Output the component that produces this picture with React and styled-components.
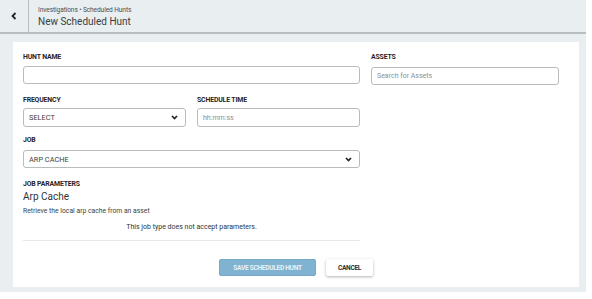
import React from 'react';
import styled, { createGlobalStyle } from 'styled-components';

const GlobalStyle = createGlobalStyle`
  html, body {
    margin: 0;
    padding: 0;
    background: #ffffff;
    font-family: Roboto, "Liberation Sans", sans-serif;
  }
`;

const Page = styled.div`
  width: 586px;
  height: 292px;
  background: #e9eef1;
  display: flex;
  flex-direction: column;
`;

const Header = styled.header`
  height: 32px;
  display: flex;
  align-items: stretch;
  border-bottom: 2px solid #b9bec1;
`;

const BackButton = styled.button`
  width: 29px;
  border: none;
  border-right: 1px solid #b9bec1;
  background: transparent;
  padding: 0;
  display: flex;
  align-items: center;
  justify-content: center;
`;

const HeaderText = styled.div`
  display: flex;
  flex-direction: column;
  justify-content: center;
  padding-left: 9px;
  padding-top: 1px;
`;

const Crumbs = styled.div`
  font-size: 6.6px;
  color: #4a4f53;
  line-height: 9px;
  letter-spacing: -0.1px;
`;

const Title = styled.h1`
  margin: 0;
  font-size: 10px;
  font-weight: 400;
  color: #3a3f42;
  line-height: 13px;
`;

const Body = styled.div`
  flex: 1;
  padding: 8px 7px 5px 13px;
  display: flex;
`;

const Card = styled.div`
  flex: 1;
  background: #ffffff;
  padding: 11px 10px 0 10px;
  display: flex;
  flex-direction: column;
`;

const Columns = styled.div`
  display: grid;
  grid-template-columns: 337px 188px;
  column-gap: 11px;
`;

const Column = styled.div`
  display: flex;
  flex-direction: column;
`;

const Row = styled.div`
  display: grid;
  grid-template-columns: 163px 163px;
  column-gap: 11px;
  margin-top: ${p => p.$mt || 0}px;
`;

const Field = styled.div`
  display: flex;
  flex-direction: column;
  margin-top: ${p => p.$mt || 0}px;
`;

const Label = styled.label`
  font-size: 6.9px;
  font-weight: 700;
  color: #1f2427;
  line-height: 8px;
  letter-spacing: -0.15px;
  margin-bottom: ${p => p.$mb ?? 5}px;
`;

const Input = styled.input`
  box-sizing: border-box;
  width: 100%;
  height: ${p => p.$h || 18}px;
  border: 1px solid #b7bcbf;
  border-radius: 3px;
  padding: 0 5px;
  font-family: inherit;
  font-size: 7px;
  color: #333;
  outline: none;
  &::placeholder {
    color: #8b9094;
  }
`;

const Select = styled.div`
  box-sizing: border-box;
  height: ${p => p.$h || 19}px;
  border: 1px solid #b7bcbf;
  border-radius: 3px;
  padding: 0 7px 0 5px;
  display: flex;
  align-items: center;
  justify-content: space-between;
  font-size: 7.4px;
  color: #3a3f42;
`;

const ParamsName = styled.div`
  font-size: 10px;
  color: #2f3437;
  line-height: 11px;
  margin-top: 3px;
`;

const ParamsDesc = styled.div`
  font-size: 6.8px;
  color: #3a3f42;
  line-height: 8px;
  margin-top: 5px;
`;

const EmptyNote = styled.div`
  text-align: center;
  font-size: 7px;
  color: #2f3437;
  line-height: 8px;
  margin-top: 8px;
  padding-bottom: 9px;
  border-bottom: 1px solid #e6e8ea;
`;

const Actions = styled.div`
  display: flex;
  justify-content: center;
  gap: 10px;
  margin-top: 18px;
`;

const Button = styled.button`
  height: 17px;
  padding: 0;
  width: ${p => p.$w}px;
  border-radius: 2px;
  font-family: inherit;
  font-size: 6.6px;
  font-weight: 700;
  letter-spacing: -0.3px;
  border: ${p => (p.$primary ? '1px solid #75a9c6' : 'none')};
  background: ${p => (p.$primary ? '#80b3d1' : '#ffffff')};
  color: ${p => (p.$primary ? '#e8f1f7' : '#2a2f32')};
  box-shadow: ${p => (p.$primary ? 'none' : '0 1px 3px rgba(0,0,0,0.3)')};
`;

const Chevron = () => (
  <svg width="7" height="5" viewBox="0 0 7 5">
    <polyline points="1,1 3.5,3.6 6,1" fill="none" stroke="#1f2427" strokeWidth="1.7" />
  </svg>
);

const BackIcon = () => (
  <svg width="6" height="8" viewBox="0 0 6 8">
    <polyline points="4.5,1 1.5,4 4.5,7" fill="none" stroke="#1f2427" strokeWidth="1.8" />
  </svg>
);

export default function App() {
  return (
    <>
      <GlobalStyle />
      <Page>
        <Header>
          <BackButton><BackIcon /></BackButton>
          <HeaderText>
            <Crumbs>Investigations • Scheduled Hunts</Crumbs>
            <Title>New Scheduled Hunt</Title>
          </HeaderText>
        </Header>
        <Body>
          <Card>
            <Columns>
              <Column>
                <Field>
                  <Label>HUNT NAME</Label>
                  <Input />
                </Field>
                <Row $mt={12}>
                  <Field>
                    <Label $mb={4}>FREQUENCY</Label>
                    <Select>SELECT <Chevron /></Select>
                  </Field>
                  <Field>
                    <Label $mb={4}>SCHEDULE TIME</Label>
                    <Input $h={19} placeholder="hh:mm:ss" />
                  </Field>
                </Row>
                <Field $mt={9}>
                  <Label $mb={6}>JOB</Label>
                  <Select $h={18}>ARP CACHE <Chevron /></Select>
                </Field>
                <Field $mt={12}>
                  <Label $mb={0}>JOB PARAMETERS</Label>
                  <ParamsName>Arp Cache</ParamsName>
                  <ParamsDesc>Retrieve the local arp cache from an asset</ParamsDesc>
                  <EmptyNote>This job type does not accept parameters.</EmptyNote>
                </Field>
              </Column>
              <Column>
                <Field>
                  <Label $mb={6}>ASSETS</Label>
                  <Input placeholder="Search for Assets" />
                </Field>
              </Column>
            </Columns>
            <Actions>
              <Button $primary $w={97}>SAVE SCHEDULED HUNT</Button>
              <Button $w={47}>CANCEL</Button>
            </Actions>
          </Card>
        </Body>
      </Page>
    </>
  );
}
